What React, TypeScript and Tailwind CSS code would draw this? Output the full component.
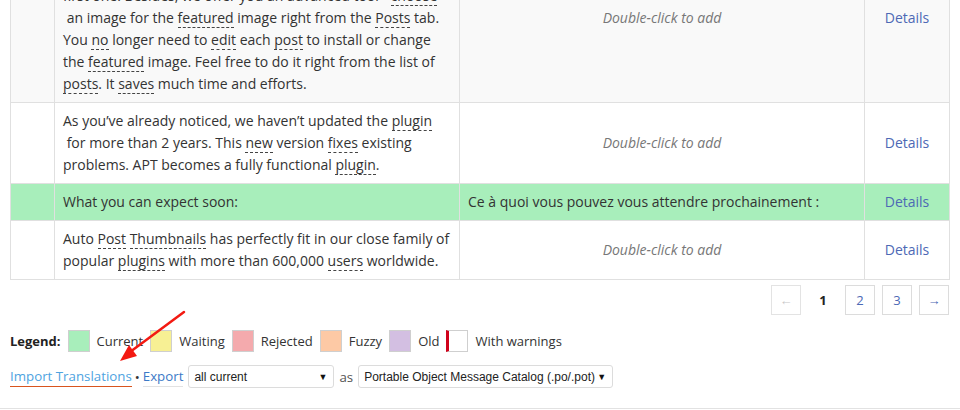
const Term = ({ children }: { children: string }) => (
  <span className="border-b border-dashed border-[#444]">{children}</span>
);

const rowCell = "border border-[#e0e0e0] px-2 py-[7px] align-middle";

const Empty = () => <span className="italic text-[#777]">Double-click to add</span>;

const DetailsLink = () => <a className="text-[#4d69b5] cursor-pointer">Details</a>;

const legend = [
  { label: "Current", swatch: "bg-[#a8eebb] border-[#cfcfcf]" },
  { label: "Waiting", swatch: "bg-[#f7f094] border-[#cfcfcf]" },
  { label: "Rejected", swatch: "bg-[#f4aaad] border-[#cfcfcf]" },
  { label: "Fuzzy", swatch: "bg-[#fdc9a5] border-[#cfcfcf]" },
  { label: "Old", swatch: "bg-[#d3bfe2] border-[#cfcfcf]" },
  { label: "With warnings", swatch: "bg-white border-[#cfcfcf] border-l-[3px] border-l-[#d0021b]" },
];

const FakeSelect = ({ value, width }: { value: string; width: string }) => (
  <div
    className={`${width} h-[23px] flex items-center justify-between pl-[5px] pr-[6px] border border-[#dcdcdc] rounded-[3px] bg-white text-[12px] text-[#222] whitespace-nowrap font-['Liberation_Sans',Arial,sans-serif]`}
  >
    <span>{value}</span>
    <span className="text-[9px] text-[#111]">▼</span>
  </div>
);

export default function App() {
  return (
    <div className="relative w-[960px] h-[410px] overflow-hidden bg-white text-[14px] leading-[22px] text-[#333] font-['Open_Sans',sans-serif]">
      <div className="-mt-[67px] px-[10px]">
        <table className="w-[939px] table-fixed border-collapse">
          <colgroup>
            <col className="w-[44px]" />
            <col className="w-[405px]" />
            <col className="w-[405px]" />
            <col className="w-[85px]" />
          </colgroup>
          <tbody>
            <tr className="bg-[#f9f9f9]">
              <td className={rowCell}></td>
              <td className={rowCell}>
                This version of Auto Post Thumbnails sets the featured
                <br />
                image not only from the first image in a post, but from any
                <br />
                first one. Besides, we offer you an advanced tool - <Term>choose</Term>
                <br />
                &nbsp;an image for the <Term>featured</Term> image right from the <Term>Posts</Term> tab.
                <br />
                You <Term>no</Term> longer need to <Term>edit</Term> each <Term>post</Term> to install or change
                <br />
                the <Term>featured</Term> image. Feel free to do it right from the list of
                <br />
                <Term>posts</Term>. It <Term>saves</Term> much time and efforts.
              </td>
              <td className={`${rowCell} text-center`}>
                <Empty />
              </td>
              <td className={`${rowCell} text-center`}>
                <DetailsLink />
              </td>
            </tr>
            <tr className="bg-white">
              <td className={rowCell}></td>
              <td className={rowCell}>
                As you’ve already noticed, we haven’t updated the <Term>plugin</Term>
                <br />
                &nbsp;for more than 2 years. This <Term>new</Term> version <Term>fixes</Term> existing
                <br />
                problems. APT becomes a fully functional <Term>plugin</Term>.
              </td>
              <td className={`${rowCell} text-center`}>
                <Empty />
              </td>
              <td className={`${rowCell} text-center`}>
                <DetailsLink />
              </td>
            </tr>
            <tr className="bg-[#a8eebb]">
              <td className={rowCell}></td>
              <td className={rowCell}>What you can expect soon:</td>
              <td className={rowCell}>Ce à quoi vous pouvez vous attendre prochainement :</td>
              <td className={`${rowCell} text-center`}>
                <DetailsLink />
              </td>
            </tr>
            <tr className="bg-white">
              <td className={rowCell}></td>
              <td className={rowCell}>
                Auto <Term>Post</Term> <Term>Thumbnails</Term> has perfectly fit in our close family of
                <br />
                popular <Term>plugins</Term> with more than 600,000 <Term>users</Term> worldwide.
              </td>
              <td className={`${rowCell} text-center`}>
                <Empty />
              </td>
              <td className={`${rowCell} text-center`}>
                <DetailsLink />
              </td>
            </tr>
          </tbody>
        </table>
      </div>

      <div className="mt-[5px] pr-[11px] flex justify-end gap-[7px] text-[13px]">
        <span className="w-[30px] h-[30px] border border-[#e3e3e3] flex items-center justify-center text-[#c8c8c8]">←</span>
        <span className="w-[30px] h-[30px] flex items-center justify-center font-bold text-[#222]">1</span>
        <a className="w-[30px] h-[30px] border border-[#dcdcdc] flex items-center justify-center text-[#4d69b5]">2</a>
        <a className="w-[30px] h-[30px] border border-[#dcdcdc] flex items-center justify-center text-[#4d69b5]">3</a>
        <a className="w-[30px] h-[30px] border border-[#dcdcdc] flex items-center justify-center text-[#4d69b5]">→</a>
      </div>

      <div className="mt-[15px] px-[10px] flex items-center gap-[7px] text-[13px]">
        <strong className="font-bold text-[#222]">Legend:</strong>
        {legend.map((item) => (
          <div key={item.label} className="flex items-center gap-[7px]">
            <span className={`w-[22px] h-[22px] border ${item.swatch}`}></span>
            <span>{item.label}</span>
          </div>
        ))}
      </div>

      <div className="mt-[13px] px-[10px] flex items-center text-[13.3px]">
        <a className="text-[#4ea3df] border-b border-[#d9541e] leading-[19px]">Import Translations</a>
        <span className="mx-[3px] text-[#333]">•</span>
        <a className="text-[#3b7ac7] border-b border-[#e2e2e2] leading-[19px]">Export</a>
        <div className="ml-[5px]">
          <FakeSelect value="all current" width="w-[146px]" />
        </div>
        <span className="mx-[5px] text-[#555]">as</span>
        <FakeSelect value="Portable Object Message Catalog (.po/.pot)" width="w-[255px]" />
      </div>

      <div className="mt-[20px] border-t border-[#e2e2e2]"></div>

      <svg className="absolute left-0 top-0 pointer-events-none" width="960" height="410">
        <line x1="184" y1="312" x2="130" y2="352" stroke="#f31a12" strokeWidth="2.5" strokeLinecap="round" />
        <polygon points="120,361 129,345 137,356" fill="#f31a12" />
      </svg>
    </div>
  );
}
